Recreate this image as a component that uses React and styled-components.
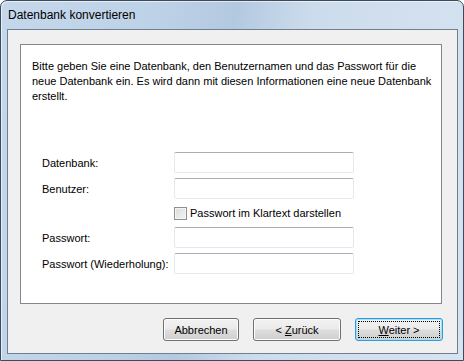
import styled, { createGlobalStyle } from "styled-components";

const GlobalStyle = createGlobalStyle`
  html, body {
    margin: 0;
    padding: 0;
    background: #fff;
  }
  body {
    font-family: "Liberation Sans", Arial, sans-serif;
    font-size: 11px;
    color: #000;
  }
`;

const Window = styled.div`
  box-sizing: border-box;
  width: 464px;
  height: 361px;
  display: flex;
  flex-direction: column;
  border: 1px solid #3b4b5c;
  border-radius: 7px 7px 0 0;
  padding: 0 5px 6px 6px;
  background: linear-gradient(100deg, #c4d7eb 0%, #bed2e7 30%, #b3c9e0 45%, #cddcec 60%, #d6e3f1 100%);
  box-shadow: inset 1px 1px 0 rgba(255, 255, 255, 0.6);
`;

const TitleBar = styled.div`
  height: 28px;
  display: flex;
  align-items: center;
  padding-left: 1px;
  font-size: 12px;
  color: #000;
`;

const Client = styled.div`
  flex: 1;
  display: flex;
  flex-direction: column;
  border: 1px solid #6f7f90;
  background: #f0f0f0;
  padding: 14px 14px 12px 12px;
`;

const Panel = styled.div`
  box-sizing: border-box;
  width: 422px;
  height: 260px;
  background: #fff;
  border: 1px solid #828790;
  padding: 14px 10px 0 11px;
  display: flex;
  flex-direction: column;
`;

const Intro = styled.p`
  margin: 0;
  line-height: 15px;
  white-space: nowrap;
`;

const Form = styled.div`
  margin-top: 48px;
  margin-left: 10px;
  display: grid;
  grid-template-columns: 132px 180px;
  row-gap: 5px;
  align-items: center;
  white-space: nowrap;
`;

const Label = styled.label`
  grid-column: 1;
`;

const Input = styled.input`
  grid-column: 2;
  box-sizing: border-box;
  width: 180px;
  height: 21px;
  margin: 0;
  border: 1px solid #e3e9ef;
  border-top-color: #abadb3;
  border-radius: 2px;
  background: #fff;
  outline: none;
`;

const CheckRow = styled.label`
  grid-column: 2;
  display: flex;
  align-items: center;
  gap: 3px;
  height: 18px;
`;

const CheckBox = styled.span`
  box-sizing: border-box;
  flex: none;
  width: 13px;
  height: 13px;
  border: 1px solid #8e8f8f;
  background: linear-gradient(135deg, #dcdcdc 0%, #f4f4f4 100%);
  box-shadow: inset 0 0 0 1px #f5f5f5;
`;

const Footer = styled.div`
  display: flex;
  justify-content: flex-end;
  gap: 14px;
  margin-top: 14px;
`;

const Button = styled.button`
  box-sizing: border-box;
  width: ${(p) => p.$w}px;
  height: 23px;
  padding: 0;
  margin: 0;
  font-family: inherit;
  font-size: 11px;
  color: #000;
  border: 1px solid ${(p) => (p.$default ? "#3399dd" : "#707070")};
  border-radius: 3px;
  background: linear-gradient(#f2f2f2 0%, #ebebeb 48%, #dddddd 52%, #cfcfcf 100%);
  box-shadow: inset 0 0 0 1px ${(p) => (p.$default ? "#9fe0fb" : "#fcfcfc")};
  position: relative;
`;

const FocusRing = styled.span`
  position: absolute;
  inset: 2px;
  border: 1px dotted #000;
`;

const Key = styled.span`
  text-decoration: underline;
`;

export default function App() {
  return (
    <>
      <GlobalStyle />
      <Window>
        <TitleBar>Datenbank konvertieren</TitleBar>
        <Client>
          <Panel>
            <Intro>
              Bitte geben Sie eine Datenbank, den Benutzernamen und das Passwort für die
              <br />
              neue Datenbank ein. Es wird dann mit diesen Informationen eine neue Datenbank
              <br />
              erstellt.
            </Intro>
            <Form>
              <Label>Datenbank:</Label>
              <Input />
              <Label>Benutzer:</Label>
              <Input />
              <CheckRow>
                <CheckBox />
                Passwort im Klartext darstellen
              </CheckRow>
              <Label>Passwort:</Label>
              <Input />
              <Label>Passwort (Wiederholung):</Label>
              <Input />
            </Form>
          </Panel>
          <Footer>
            <Button $w={76}>Abbrechen</Button>
            <Button $w={88}>
              &lt; <Key>Z</Key>urück
            </Button>
            <Button $w={88} $default>
              <FocusRing />
              <Key>W</Key>eiter &gt;
            </Button>
          </Footer>
        </Client>
      </Window>
    </>
  );
}
